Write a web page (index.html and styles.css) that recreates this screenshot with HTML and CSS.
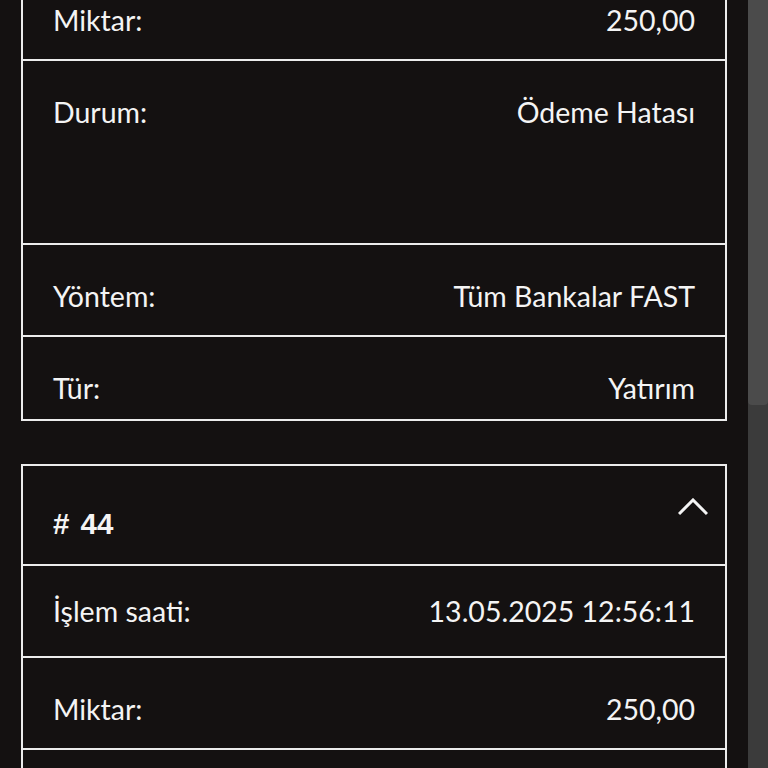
FILE: index.html
```html
<!DOCTYPE html>
<html lang="tr">
<head>
    <meta charset="UTF-8">
    <meta name="viewport" content="width=device-width, initial-scale=1.0">
    <title>İşlem Geçmişi</title>
    <link rel="stylesheet" href="styles.css">
</head>
<body>
    <div class="list">
        <div class="card card-cut">
            <div class="row row-first">
                <span>Miktar:</span>
                <span>250,00</span>
            </div>
            <div class="row row-tall">
                <span>Durum:</span>
                <span>Ödeme Hatası</span>
            </div>
            <div class="row">
                <span>Yöntem:</span>
                <span>Tüm Bankalar FAST</span>
            </div>
            <div class="row row-last">
                <span>Tür:</span>
                <span>Yatırım</span>
            </div>
        </div>

        <div class="card">
            <div class="card-header">
                <span class="card-title"># 44</span>
                <svg class="chevron" width="30" height="19" viewBox="0 0 30 19">
                    <polyline points="1,16 15,2 29,16" fill="none" stroke="#f4f4f4" stroke-width="3"/>
                </svg>
            </div>
            <div class="row row-time">
                <span>İşlem saati:</span>
                <span>13.05.2025 12:56:11</span>
            </div>
            <div class="row">
                <span>Miktar:</span>
                <span>250,00</span>
            </div>
            <div class="row row-tall">
                <span>Durum:</span>
                <span>Ödeme Hatası</span>
            </div>
        </div>
    </div>

    <div class="scrollbar">
        <div class="scrollbar-thumb"></div>
    </div>
</body>
</html>
```

FILE: styles.css
```css
html {
    background-color: #141111;
}
body {
    font-family: Lato, "Noto Sans", sans-serif;
    background-color: #141111;
    color: #f4f4f4;
    margin: 0;
    padding: 0 41px 0 21px;
    height: 768px;
    overflow: hidden;
}
.list {
    display: flex;
    flex-direction: column;
    gap: 43px;
}
.card {
    border: 2px solid #ececec;
}
.card-cut {
    border-top: none;
}
.card-header {
    display: flex;
    justify-content: space-between;
    align-items: flex-start;
    height: 98px;
    box-sizing: border-box;
    padding: 32px 17px 0 30px;
    font-family: "Liberation Sans", Arial, sans-serif;
    font-weight: 700;
    font-size: 29.5px;
    line-height: 34px;
}
.card-title {
    padding-top: 9px;
    word-spacing: 3px;
}
.chevron {
    display: block;
}
.row {
    display: flex;
    justify-content: space-between;
    height: 92px;
    box-sizing: border-box;
    padding: 34px 30px 0 30px;
    border-top: 2px solid #ececec;
    font-size: 28.5px;
    line-height: 34px;
}
.row-first {
    border-top: none;
    height: 59px;
    padding-top: 3px;
}
.row-tall {
    height: 184px;
}
.row-last {
    height: 84px;
}
.row-time {
    padding-top: 28px;
}
.scrollbar {
    position: fixed;
    top: 0;
    right: 0;
    bottom: 0;
    width: 20px;
    background-color: #3b3b3b;
}
.scrollbar-thumb {
    height: 405px;
    background-color: #4b4b4b;
    border-radius: 0 0 4px 4px;
}
```
